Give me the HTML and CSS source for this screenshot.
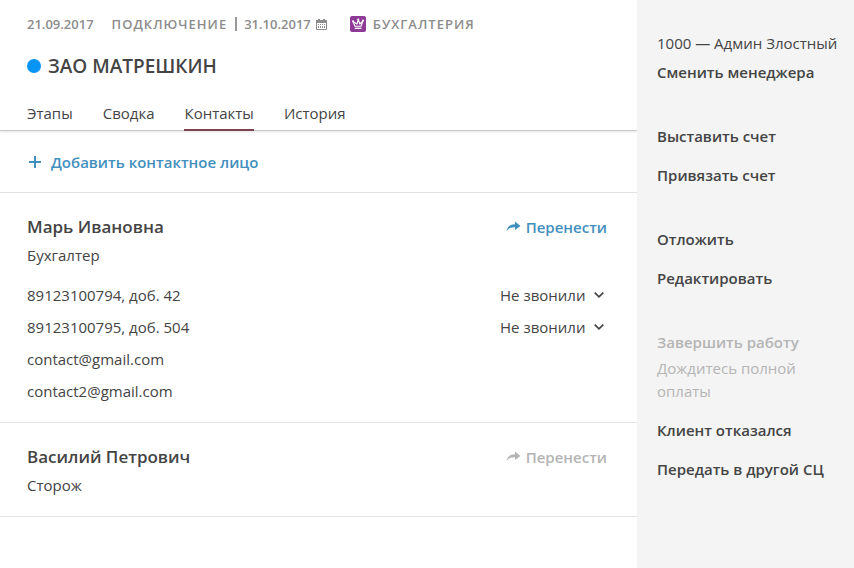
FILE: index.html
```html
<!DOCTYPE html>
<html lang="ru">
<head>
<meta charset="utf-8">
<meta name="viewport" content="width=device-width, initial-scale=1">
<title>ЗАО Матрешкин — Контакты</title>
<link rel="stylesheet" href="styles.css">
</head>
<body>
<svg class="sprite" aria-hidden="true">
  <symbol id="share" viewBox="0 0 15 12"><path d="M0.500 10.500C1 6 4 3.200 9 3.200V0.500L14.500 5 9 9V6.200C5 6 2 7.300 0.500 10.500Z" fill="currentColor"/></symbol>
  <symbol id="chevron" viewBox="0 0 10 6"><path d="M0.700 0.700L5 4.800L9.300 0.700" fill="none" stroke="currentColor" stroke-width="1.700"/></symbol>
</svg>
<div class="page">
  <main class="main">
    <header class="header">
      <div class="meta">
        <time class="date" datetime="2017-09-21">21.09.2017</time>
        <span class="stage">Подключение</span>
        <span class="divider"></span>
        <time class="date" datetime="2017-10-31">31.10.2017</time>
        <svg class="calendar" viewBox="0 0 11 11" aria-hidden="true">
          <path d="M0.500 2H10.500V10.500H0.500Z" fill="none" stroke="currentColor"/>
          <path d="M0 1H11V4H0ZM2 0H4V2H2ZM7 0H9V2H7ZM2 5H3V6H2ZM4 5H5V6H4ZM6 5H7V6H6ZM8 5H9V6H8ZM2 7H3V9H2ZM4 7H5V9H4ZM6 7H7V9H6ZM8 7H9V9H8Z" fill="currentColor"/>
        </svg>
        <svg class="product-icon" viewBox="0 0 16 16" aria-hidden="true">
          <rect width="16" height="16" rx="2" fill="#8e3b96"/>
          <path d="M3 5.500L5 10.200H11L13 4.800L9.800 8L8.300 3.500L7 8L3 5.500" fill="none" stroke="#fff" stroke-width="1.100" stroke-linejoin="round"/>
          <path d="M4.800 12.300H11.500" stroke="#fff" stroke-width="1.300"/>
          <g fill="#fff"><circle cx="3" cy="5.300" r="1"/><circle cx="8.300" cy="3.500" r="1"/><circle cx="13" cy="4.600" r="1"/></g>
        </svg>
        <span class="product">Бухгалтерия</span>
      </div>
      <h1 class="title"><span class="status"></span>ЗАО МАТРЕШКИН</h1>
      <nav class="tabs">
        <a class="tab" href="#stages">Этапы</a>
        <a class="tab" href="#summary">Сводка</a>
        <a class="tab tab-active" href="#contacts" aria-current="page">Контакты</a>
        <a class="tab" href="#history">История</a>
      </nav>
    </header>
    <div class="toolbar">
      <button class="action add" type="button">
        <svg class="plus" viewBox="0 0 12 12" aria-hidden="true"><path d="M6 0V12M0 6H12" stroke="currentColor" stroke-width="2"/></svg>
        Добавить контактное лицо
      </button>
    </div>
    <section class="contact">
      <div class="row">
        <h2 class="name">Марь Ивановна</h2>
        <button class="action" type="button"><svg class="share" aria-hidden="true"><use href="#share"/></svg>Перенести</button>
      </div>
      <p class="role">Бухгалтер</p>
      <ul class="details">
        <li class="row">
          <label for="call1">89123100794, доб. 42</label>
          <span class="picker"><select id="call1" class="select"><option>Не звонили</option></select><svg class="chevron" aria-hidden="true"><use href="#chevron"/></svg></span>
        </li>
        <li class="row">
          <label for="call2">89123100795, доб. 504</label>
          <span class="picker"><select id="call2" class="select"><option>Не звонили</option></select><svg class="chevron" aria-hidden="true"><use href="#chevron"/></svg></span>
        </li>
        <li class="row"><a href="mailto:contact@gmail.com">contact@gmail.com</a></li>
        <li class="row"><a href="mailto:contact2@gmail.com">contact2@gmail.com</a></li>
      </ul>
    </section>
    <section class="contact">
      <div class="row">
        <h2 class="name">Василий Петрович</h2>
        <button class="action" type="button" disabled><svg class="share" aria-hidden="true"><use href="#share"/></svg>Перенести</button>
      </div>
      <p class="role">Сторож</p>
    </section>
  </main>
  <aside class="side">
    <div class="group manager">
      <p class="manager-name">1000 — Админ Злостный</p>
      <button class="command" type="button">Сменить менеджера</button>
    </div>
    <div class="group">
      <button class="command" type="button">Выставить счет</button>
      <button class="command" type="button">Привязать счет</button>
    </div>
    <div class="group">
      <button class="command" type="button">Отложить</button>
      <button class="command" type="button">Редактировать</button>
    </div>
    <div class="group">
      <div class="blocked">
        <button class="command" type="button" disabled>Завершить работу</button>
        <p class="hint">Дождитесь полной оплаты</p>
      </div>
      <button class="command" type="button">Клиент отказался</button>
      <button class="command" type="button">Передать в другой СЦ</button>
    </div>
  </aside>
</div>
</body>
</html>
```
FILE: styles.css
```css
* { box-sizing: border-box; }
body, h1, h2, p, ul { margin: 0; padding: 0; }
body {
  background: #fff;
  color: #444;
  font-family: "Open Sans", "Noto Sans", sans-serif;
  font-size: 15px;
  line-height: 24px;
}
ul { list-style: none; }
a { color: inherit; text-decoration: none; }
button, select {
  appearance: none;
  background: none;
  border: 0;
  padding: 0;
  color: inherit;
  font: inherit;
  cursor: pointer;
}
.sprite { display: none; }
.page {
  display: grid;
  grid-template-columns: minmax(0, 1fr) 217px;
  min-height: 100vh;
}
.header {
  padding: 12px 27px 0;
  border-bottom: 1px solid #ccc;
  box-shadow: 0 1px 2px #e4e4e4;
}
.meta {
  display: flex;
  align-items: center;
  color: #8c8c8c;
  font-size: 13px;
  font-weight: 600;
  white-space: nowrap;
}
.stage, .product { letter-spacing: 1px; text-transform: uppercase; }
.stage { margin-left: 18px; }
.divider { width: 2px; height: 14px; margin: 0 7px 0 8px; background: #999; }
.calendar { width: 11px; height: 11px; margin-left: 5px; }
.product-icon { width: 16px; height: 16px; margin: 0 7px 0 23px; }
.title {
  display: flex;
  align-items: center;
  gap: 7px;
  margin-top: 16px;
  font-size: 19px;
  font-weight: 600;
  line-height: 28px;
}
.status { width: 14px; height: 14px; border-radius: 50%; background: #0894f4; }
.tabs { display: flex; gap: 30px; margin-top: 21px; }
.tab { padding-bottom: 4px; border-bottom: 2px solid transparent; margin-bottom: -1px; }
.tab-active { border-color: #7b4450; }
.toolbar { padding: 19px 27px 18px; border-bottom: 1px solid #e2e2e2; }
.action {
  display: flex;
  align-items: center;
  gap: 5px;
  color: #428fbd;
  font-weight: 600;
}
.action:disabled, .command:disabled { color: #b4b4b4; cursor: default; }
.add { gap: 10px; padding-left: 2px; }
.plus { width: 12px; height: 12px; }
.share { width: 15px; height: 12px; }
.contact { padding: 22px 30px 19px 27px; border-bottom: 1px solid #e2e2e2; }
.row { display: flex; justify-content: space-between; align-items: center; }
.name { font-size: 17px; font-weight: 600; line-height: 24px; }
.role { margin-top: 4px; }
.details { display: grid; gap: 8px; margin-top: 16px; }
.picker { display: flex; align-items: center; gap: 8px; padding-right: 3px; }
.chevron { width: 10px; height: 6px; pointer-events: none; }
.side {
  display: flex;
  flex-direction: column;
  gap: 40px;
  padding: 31px 12px 31px 20px;
  background: #f4f4f4;
}
.group { display: flex; flex-direction: column; align-items: flex-start; gap: 15px; }
.manager { gap: 5px; }
.manager-name { white-space: nowrap; }
.command { font-weight: 600; text-align: left; }
.hint { max-width: 160px; margin-top: 3px; color: #b4b4b4; line-height: 23px; }
```
